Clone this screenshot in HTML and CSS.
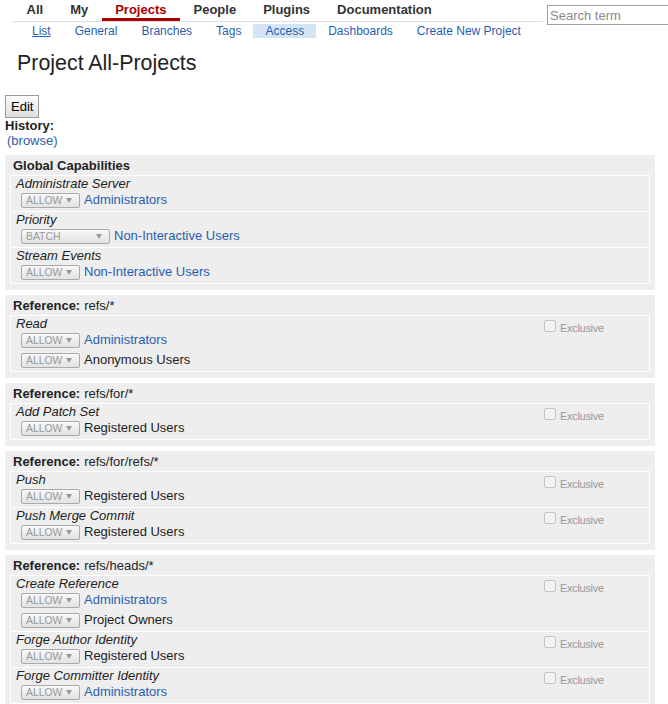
FILE: index.html
```html
<!DOCTYPE html>
<html>
<head>
<meta charset="utf-8">
<title>Project All-Projects</title>
<link rel="stylesheet" href="styles.css">
</head>
<body>
<header class="top">
  <nav class="navs">
    <ul class="tabs">
      <li><a href="#">All</a></li>
      <li><a href="#">My</a></li>
      <li><a href="#" class="active">Projects</a></li>
      <li><a href="#">People</a></li>
      <li><a href="#">Plugins</a></li>
      <li><a href="#">Documentation</a></li>
    </ul>
    <ul class="subtabs">
      <li><a href="#" class="current">List</a></li>
      <li><a href="#">General</a></li>
      <li><a href="#">Branches</a></li>
      <li><a href="#">Tags</a></li>
      <li><a href="#" class="selected">Access</a></li>
      <li><a href="#">Dashboards</a></li>
      <li><a href="#">Create New Project</a></li>
    </ul>
  </nav>
  <input class="search" type="text" placeholder="Search term">
</header>

<main class="page">
  <h1 class="title">Project All-Projects</h1>
  <button class="edit" type="button">Edit</button>
  <div class="history">History:</div>
  <div class="browse"><a href="#">(browse)</a></div>

  <section class="sec">
    <div class="sec-head">Global Capabilities</div>
    <div class="perms">
      <div class="perm">
        <div class="perm-main">
          <div class="perm-name">Administrate Server</div>
          <div class="rule"><span class="sel">ALLOW<svg class="arr" width="6" height="5" viewBox="0 0 6 5"><path d="M0 0H6L3 5Z"/></svg></span><a href="#" class="grp">Administrators</a></div>
        </div>
      </div>
      <div class="perm">
        <div class="perm-main">
          <div class="perm-name">Priority</div>
          <div class="rule"><span class="sel wide">BATCH<svg class="arr" width="6" height="5" viewBox="0 0 6 5"><path d="M0 0H6L3 5Z"/></svg></span><a href="#" class="grp">Non-Interactive Users</a></div>
        </div>
      </div>
      <div class="perm">
        <div class="perm-main">
          <div class="perm-name">Stream Events</div>
          <div class="rule"><span class="sel">ALLOW<svg class="arr" width="6" height="5" viewBox="0 0 6 5"><path d="M0 0H6L3 5Z"/></svg></span><a href="#" class="grp">Non-Interactive Users</a></div>
        </div>
      </div>
    </div>
  </section>

  <section class="sec">
    <div class="sec-head">Reference:<span class="ref">refs/*</span></div>
    <div class="perms">
      <div class="perm">
        <div class="perm-main">
          <div class="perm-name">Read</div>
          <div class="rule"><span class="sel">ALLOW<svg class="arr" width="6" height="5" viewBox="0 0 6 5"><path d="M0 0H6L3 5Z"/></svg></span><a href="#" class="grp">Administrators</a></div>
          <div class="rule"><span class="sel">ALLOW<svg class="arr" width="6" height="5" viewBox="0 0 6 5"><path d="M0 0H6L3 5Z"/></svg></span><span class="grp">Anonymous Users</span></div>
        </div>
        <label class="excl"><input type="checkbox" class="excl-box" disabled><span class="excl-text">Exclusive</span></label>
      </div>
    </div>
  </section>

  <section class="sec">
    <div class="sec-head">Reference:<span class="ref">refs/for/*</span></div>
    <div class="perms">
      <div class="perm">
        <div class="perm-main">
          <div class="perm-name">Add Patch Set</div>
          <div class="rule"><span class="sel">ALLOW<svg class="arr" width="6" height="5" viewBox="0 0 6 5"><path d="M0 0H6L3 5Z"/></svg></span><span class="grp">Registered Users</span></div>
        </div>
        <label class="excl"><input type="checkbox" class="excl-box" disabled><span class="excl-text">Exclusive</span></label>
      </div>
    </div>
  </section>

  <section class="sec">
    <div class="sec-head">Reference:<span class="ref">refs/for/refs/*</span></div>
    <div class="perms">
      <div class="perm">
        <div class="perm-main">
          <div class="perm-name">Push</div>
          <div class="rule"><span class="sel">ALLOW<svg class="arr" width="6" height="5" viewBox="0 0 6 5"><path d="M0 0H6L3 5Z"/></svg></span><span class="grp">Registered Users</span></div>
        </div>
        <label class="excl"><input type="checkbox" class="excl-box" disabled><span class="excl-text">Exclusive</span></label>
      </div>
      <div class="perm">
        <div class="perm-main">
          <div class="perm-name">Push Merge Commit</div>
          <div class="rule"><span class="sel">ALLOW<svg class="arr" width="6" height="5" viewBox="0 0 6 5"><path d="M0 0H6L3 5Z"/></svg></span><span class="grp">Registered Users</span></div>
        </div>
        <label class="excl"><input type="checkbox" class="excl-box" disabled><span class="excl-text">Exclusive</span></label>
      </div>
    </div>
  </section>

  <section class="sec">
    <div class="sec-head">Reference:<span class="ref">refs/heads/*</span></div>
    <div class="perms">
      <div class="perm">
        <div class="perm-main">
          <div class="perm-name">Create Reference</div>
          <div class="rule"><span class="sel">ALLOW<svg class="arr" width="6" height="5" viewBox="0 0 6 5"><path d="M0 0H6L3 5Z"/></svg></span><a href="#" class="grp">Administrators</a></div>
          <div class="rule"><span class="sel">ALLOW<svg class="arr" width="6" height="5" viewBox="0 0 6 5"><path d="M0 0H6L3 5Z"/></svg></span><span class="grp">Project Owners</span></div>
        </div>
        <label class="excl"><input type="checkbox" class="excl-box" disabled><span class="excl-text">Exclusive</span></label>
      </div>
      <div class="perm">
        <div class="perm-main">
          <div class="perm-name">Forge Author Identity</div>
          <div class="rule"><span class="sel">ALLOW<svg class="arr" width="6" height="5" viewBox="0 0 6 5"><path d="M0 0H6L3 5Z"/></svg></span><span class="grp">Registered Users</span></div>
        </div>
        <label class="excl"><input type="checkbox" class="excl-box" disabled><span class="excl-text">Exclusive</span></label>
      </div>
      <div class="perm">
        <div class="perm-main">
          <div class="perm-name">Forge Committer Identity</div>
          <div class="rule"><span class="sel">ALLOW<svg class="arr" width="6" height="5" viewBox="0 0 6 5"><path d="M0 0H6L3 5Z"/></svg></span><a href="#" class="grp">Administrators</a></div>
        </div>
        <label class="excl"><input type="checkbox" class="excl-box" disabled><span class="excl-text">Exclusive</span></label>
      </div>
    </div>
  </section>
</main>
</body>
</html>
```

FILE: styles.css
```css
html, body {
  margin: 0;
  padding: 0;
}

body {
  font-family: "Liberation Sans", Arial, sans-serif;
  font-size: 13px;
  color: #222;
  background: #fff;
  overflow-x: hidden;
}

a {
  color: #2a5db0;
  text-decoration: none;
}

/* ---------- header ---------- */
.top {
  display: flex;
  align-items: flex-start;
}

.navs {
  flex: none;
  margin-left: 13px;
  width: 530px;
}

.tabs,
.subtabs {
  list-style: none;
  margin: 0;
  padding: 0;
  display: flex;
}

.tabs {
  border-bottom: 1px solid #ddd;
}

.tabs a {
  display: block;
  padding: 2px 13.5px 1px;
  line-height: 15px;
  font-weight: bold;
  color: #333;
  border-bottom: 3px solid transparent;
}

.tabs a.active {
  color: #a00;
  border-bottom-color: #a00;
}

.subtabs {
  margin-top: 2px;
  padding-left: 7px;
}

.subtabs li {
  flex: none;
}

.subtabs a {
  display: block;
  padding: 0 12px;
  font-size: 12px;
  line-height: 14px;
  white-space: nowrap;
}

.subtabs a.current {
  text-decoration: underline;
}

.subtabs a.selected {
  background: #d4e6f5;
}

.search {
  box-sizing: border-box;
  margin: 5px 0 0 4px;
  width: 140px;
  height: 20px;
  padding: 0 2px;
  border: 1px solid #a0a0a0;
  font-family: "Liberation Sans", Arial, sans-serif;
  font-size: 13px;
  color: #222;
  background: #fff;
  flex: none;
}

.search::placeholder {
  color: #8a8a8a;
}

/* ---------- page ---------- */
.page {
  padding: 0 5px;
}

.title {
  margin: 13px 0 0 12px;
  font-size: 21.4px;
  line-height: 24px;
  font-weight: normal;
  color: #222;
}

.edit {
  display: block;
  margin-top: 20px;
  box-sizing: border-box;
  height: 23px;
  padding: 0 5px;
  border: 1px solid #9a9a9a;
  border-radius: 0;
  background: linear-gradient(#fdfdfd, #dedede);
  font-family: "Liberation Sans", Arial, sans-serif;
  font-size: 13px;
  color: #000;
}

.history {
  font-weight: bold;
  line-height: 15px;
}

.browse {
  line-height: 15px;
  margin-left: 2px;
}

/* ---------- sections ---------- */
.sec {
  box-sizing: border-box;
  width: 650px;
  margin-top: 5px;
  background: #eee;
  padding: 3px 5px 6px;
}

.browse + .sec {
  margin-top: 7px;
}

.sec-head {
  line-height: 16px;
  padding-left: 3px;
  margin-bottom: 1px;
  font-weight: bold;
}

.ref {
  font-weight: normal;
  margin-left: 4px;
}

.perms {
  border: 1px solid #fff;
}

.perm {
  display: flex;
  padding-left: 5px;
}

.perm + .perm {
  border-top: 1px solid #fff;
}

.perm-main {
  flex: 1;
}

.perm-name {
  font-style: italic;
  line-height: 15px;
}

.rule {
  display: flex;
  align-items: flex-start;
  height: 20px;
  padding-left: 5px;
}

.sel {
  box-sizing: border-box;
  display: inline-flex;
  align-items: center;
  justify-content: space-between;
  margin-top: 2px;
  width: 59px;
  height: 15px;
  padding: 0 7px 0 4px;
  border: 1px solid #aaa;
  border-radius: 2px;
  background: linear-gradient(#f8f8f8, #e2e2e2);
  color: #999;
  font-size: 10.4px;
  line-height: 13px;
}

.sel.wide {
  width: 89px;
}

.arr {
  fill: #999;
}

.grp {
  margin-left: 4px;
  line-height: 18px;
}

span.grp {
  color: #222;
}

/* exclusive flag */
.excl {
  width: 105px;
  flex: none;
  display: flex;
  align-items: flex-start;
  padding-top: 4px;
}

.excl-box {
  appearance: none;
  -webkit-appearance: none;
  box-sizing: border-box;
  width: 12px;
  height: 12px;
  margin: 0 4px 0 0;
  border: 1px solid #c6c6c6;
  border-radius: 2px;
  background: #f3f3f3;
}

.excl-text {
  margin-top: 1px;
  font-size: 11px;
  letter-spacing: -0.3px;
  line-height: 14px;
  color: #999;
}
```
